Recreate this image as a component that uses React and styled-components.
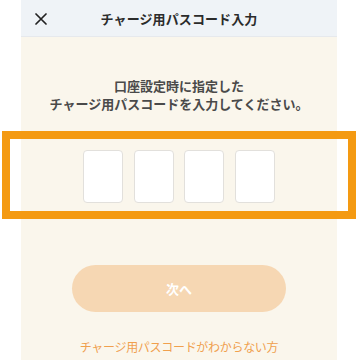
import styled, { createGlobalStyle } from "styled-components";

const GlobalStyle = createGlobalStyle`
  html, body {
    margin: 0;
    padding: 0;
    background: #ffffff;
    font-family: "Noto Sans CJK JP", "Noto Sans", sans-serif;
  }
`;

const Screen = styled.div`
  width: 316px;
  margin-left: 21px;
  min-height: 360px;
  background: #faf6ec;
  display: flex;
  flex-direction: column;
`;

const Header = styled.header`
  height: 37px;
  background: #eff3f7;
  border-bottom: 1px solid #e6e9ed;
  box-sizing: border-box;
  display: grid;
  grid-template-columns: 40px 1fr 40px;
  align-items: center;
`;

const CloseButton = styled.button`
  border: 0;
  background: none;
  padding: 0 0 0 14px;
  height: 37px;
  display: flex;
  align-items: center;
  cursor: pointer;
`;

const Title = styled.h1`
  margin: 0;
  text-align: center;
  font-size: 13px;
  font-weight: 700;
  color: #2b2b2b;
  letter-spacing: 0.1px;
`;

const Body = styled.main`
  display: flex;
  flex-direction: column;
  align-items: center;
  padding-top: 40px;
`;

const Message = styled.p`
  margin: 0;
  text-align: center;
  font-size: 13px;
  line-height: 18px;
  font-weight: 700;
  color: #4a4a4a;
`;

const CodeArea = styled.div`
  position: relative;
  align-self: stretch;
  display: flex;
  justify-content: center;
  gap: 10.5px;
  margin-top: 37px;
`;

const CodeCell = styled.input`
  width: 40px;
  height: 53px;
  box-sizing: border-box;
  border: 1px solid #e2e0dc;
  border-radius: 4px;
  background: #ffffff;
  padding: 0;
  text-align: center;
  font-size: 20px;
`;

const Highlight = styled.div`
  position: absolute;
  left: -19px;
  right: -19px;
  top: -19px;
  bottom: -16px;
  border: 8px solid #f49a12;
  pointer-events: none;
`;

const NextButton = styled.button`
  margin-top: 62px;
  width: 214px;
  height: 47px;
  border: 0;
  border-radius: 24px;
  background: #f6d7b3;
  color: #ffffff;
  font-family: inherit;
  font-size: 13px;
  font-weight: 700;
`;

const HelpLink = styled.a`
  margin-top: 26px;
  font-size: 12px;
  color: #f0a04e;
  text-decoration: none;
  letter-spacing: -0.3px;
`;

const CloseIcon = () => (
  <svg width="12" height="12" viewBox="0 0 12 12">
    <path d="M1 1 L11 11 M11 1 L1 11" stroke="#222" strokeWidth="1.7" strokeLinecap="round" />
  </svg>
);

export default function App() {
  return (
    <>
      <GlobalStyle />
      <Screen>
        <Header>
          <CloseButton aria-label="閉じる">
            <CloseIcon />
          </CloseButton>
          <Title>チャージ用パスコード入力</Title>
          <span />
        </Header>
        <Body>
          <Message>
            口座設定時に指定した
            <br />
            チャージ用パスコードを入力してください。
          </Message>
          <CodeArea>
            {[0, 1, 2, 3].map((i) => (
              <CodeCell key={i} type="password" maxLength={1} />
            ))}
            <Highlight />
          </CodeArea>
          <NextButton disabled>次へ</NextButton>
          <HelpLink href="#">チャージ用パスコードがわからない方</HelpLink>
        </Body>
      </Screen>
    </>
  );
}
